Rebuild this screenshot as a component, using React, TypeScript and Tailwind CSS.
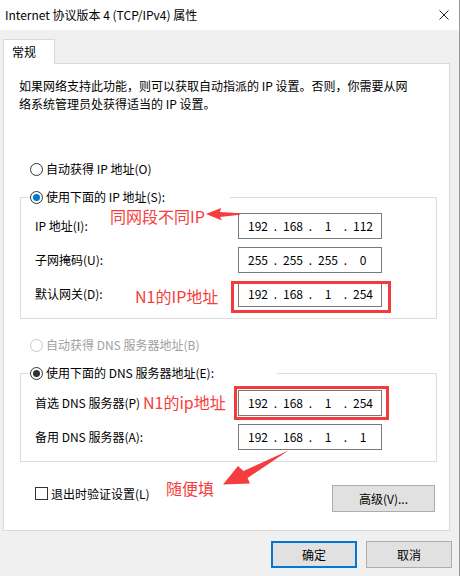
import React, { Fragment } from "react";

function Radio({ checked, disabled, blue }: { checked?: boolean; disabled?: boolean; blue?: boolean }) {
  return (
    <span
      className={`w-[13px] h-[13px] rounded-full border bg-white flex items-center justify-center shrink-0 ${
        disabled ? "border-[#c8c8c8]" : "border-[#333333]"
      }`}
    >
      {checked && <span className={`w-[7px] h-[7px] rounded-full ${blue ? "bg-[#0078d7]" : "bg-[#333333]"}`} />}
    </span>
  );
}

function IpBox({ parts }: { parts: string[] }) {
  return (
    <div className="w-[144px] h-[26px] border border-[#7a7a7a] bg-white flex items-center pl-[5px] text-[12px] text-black">
      {parts.map((p, i) => (
        <Fragment key={i}>
          {i > 0 && <span className="w-[7px] text-center">.</span>}
          <span className="w-[28px] text-center">{p}</span>
        </Fragment>
      ))}
    </div>
  );
}

function Row({ label, parts }: { label: string; parts: string[] }) {
  return (
    <div className="flex items-center h-[26px]">
      <span className="w-[203px]">{label}</span>
      <IpBox parts={parts} />
    </div>
  );
}

export default function App() {
  return (
    <div className="w-[461px] h-[576px] bg-white relative overflow-hidden font-['Noto_Sans_CJK_SC',sans-serif] text-[12px] text-black leading-[16px]">
      <div className="w-[460px] h-full border-r border-[#9a9a9a] bg-[#f0f0f0] flex flex-col">
        {/* title bar */}
        <div className="h-[30px] bg-white flex items-center justify-between pl-[5px] pr-[10px] shrink-0">
          <span>Internet 协议版本 4 (TCP/IPv4) 属性</span>
          <svg width="10" height="10" viewBox="0 0 10 10">
            <path d="M0.5 0.5 L9.5 9.5 M9.5 0.5 L0.5 9.5" stroke="#222" strokeWidth="1" />
          </svg>
        </div>
        {/* body */}
        <div className="pt-[9px] flex flex-col">
          <div className="ml-[3px] w-[52px] h-[25px] border border-b-0 border-[#d9d9d9] bg-white relative z-10 mb-[-1px] pl-[8px] flex items-center">
            常规
          </div>
          <div className="ml-[3px] w-[447px] h-[468px] border border-[#d9d9d9] bg-white flex flex-col">
            <p className="ml-[15px] mt-[13px] leading-[18px]">
              如果网络支持此功能，则可以获取自动指派的 IP 设置。否则，你需要从网
              <br />
              络系统管理员处获得适当的 IP 设置。
            </p>
            <div className="mt-[48px] ml-[26px] flex items-center gap-[3px] h-[16px]">
              <Radio />
              <span>自动获得 IP 地址(O)</span>
            </div>
            <fieldset className="mt-[12px] ml-[16px] w-[417px] px-[9px] pt-[8px] pb-[11px] border border-[#dcdcdc]">
              <legend className="w-[200px] h-[16px] flex items-center gap-[3px]">
                <Radio checked blue />
                <span>使用下面的 IP 地址(S):</span>
              </legend>
              <div className="flex flex-col gap-[8px] pl-[5px]">
                <Row label="IP 地址(I):" parts={["192", "168", "1", "112"]} />
                <Row label="子网掩码(U):" parts={["255", "255", "255", "0"]} />
                <Row label="默认网关(D):" parts={["192", "168", "1", "254"]} />
              </div>
            </fieldset>
            <div className="mt-[18px] ml-[26px] flex items-center gap-[3px] h-[16px] text-[#a0a0a0]">
              <Radio disabled />
              <span>自动获得 DNS 服务器地址(B)</span>
            </div>
            <fieldset className="mt-[12px] ml-[16px] w-[417px] px-[9px] pt-[9px] pb-[11px] border border-[#dcdcdc]">
              <legend className="w-[247px] h-[16px] flex items-center gap-[3px]">
                <Radio checked />
                <span>使用下面的 DNS 服务器地址(E):</span>
              </legend>
              <div className="flex flex-col gap-[8px] pl-[5px]">
                <Row label="首选 DNS 服务器(P)" parts={["192", "168", "1", "254"]} />
                <Row label="备用 DNS 服务器(A):" parts={["192", "168", "1", "1"]} />
              </div>
            </fieldset>
            <div className="mt-[23px] ml-[16px] w-[417px] flex justify-between items-start">
              <div className="mt-[2px] ml-[15px] flex items-center gap-[3px] h-[13px]">
                <span className="w-[13px] h-[13px] border border-[#333333] bg-white shrink-0" />
                <span>退出时验证设置(L)</span>
              </div>
              <button className="w-[103px] h-[27px] mr-[2px] border border-[#adadad] bg-[#e1e1e1] flex items-center justify-center">
                高级(V)...
              </button>
            </div>
          </div>
          <div className="mt-[10px] flex justify-end gap-[9px] pr-[7px]">
            <button className="w-[86px] h-[27px] border-2 border-[#0078d7] bg-[#e1e1e1] flex items-center justify-center">
              确定
            </button>
            <button className="w-[86px] h-[27px] border border-[#adadad] bg-[#e1e1e1] flex items-center justify-center">
              取消
            </button>
          </div>
        </div>
      </div>

      {/* annotations */}
      <div className="absolute left-[231px] top-[281px] w-[160px] h-[32px] border-[3px] border-[#f23b3b]" />
      <div className="absolute left-[234px] top-[386px] w-[155px] h-[34px] border-[3px] border-[#f23b3b]" />
      <span className="absolute left-[110px] top-[205px] text-[16px] leading-[22px] text-[#f53d3d]">同网段不同IP</span>
      <span className="absolute left-[135px] top-[285px] text-[16px] leading-[22px] text-[#f53d3d]">N1的IP地址</span>
      <span className="absolute left-[143px] top-[391px] text-[16px] leading-[22px] text-[#f53d3d]">N1的ip地址</span>
      <span className="absolute left-[166px] top-[477px] text-[16px] leading-[22px] text-[#f53d3d]">随便填</span>
      <svg className="absolute left-0 top-0 pointer-events-none" width="461" height="576" viewBox="0 0 461 576">
        <polygon points="206,214 221,208 220,212 240,213.3 240,214.7 220,217 222,220.5" fill="#f53d3d" />
        <polygon points="223,484.5 238,466 243.5,471 288.5,450.5 247.5,478 250,483.5" fill="#f53d3d" />
      </svg>
    </div>
  );
}
